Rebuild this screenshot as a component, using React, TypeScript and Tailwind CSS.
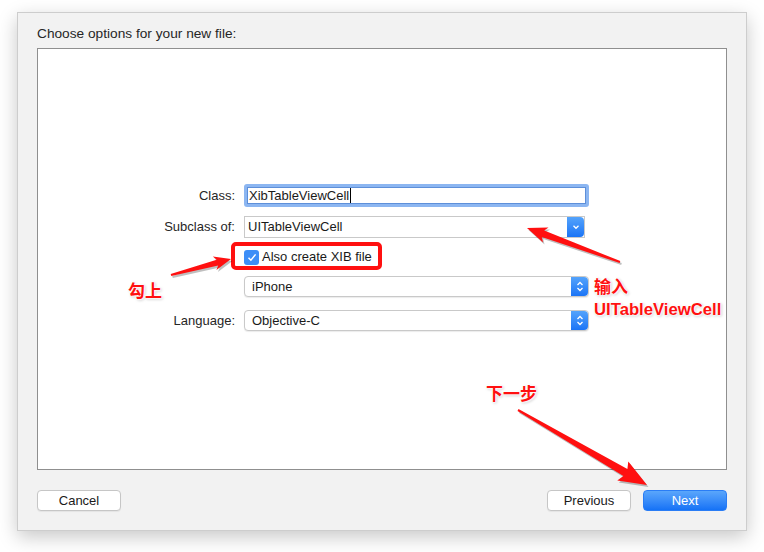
import React from "react";

const FONT = "font-['Helvetica_Neue','Liberation_Sans',Arial,sans-serif]";
const NOTE =
  "absolute font-bold text-[#ff1010] font-['Liberation_Sans','Noto_Sans_CJK_SC',sans-serif] leading-none [text-shadow:0_0_1px_#fff,0_0_2px_#fff,1px_1px_2px_#fff,-1px_-1px_2px_#fff,1px_1px_3px_rgba(0,0,0,0.35)]";

// polygon for a tapered annotation arrow, tail -> tip
function arrowPoints(
  x1: number,
  y1: number,
  x2: number,
  y2: number,
  head: number,
  headW: number,
  tailW: number,
  neckW: number
) {
  const dx = x2 - x1;
  const dy = y2 - y1;
  const len = Math.hypot(dx, dy);
  const ux = dx / len;
  const uy = dy / len;
  const nx = -uy;
  const ny = ux;
  const bx = x2 - ux * head;
  const by = y2 - uy * head;
  const p = (x: number, y: number) => `${x.toFixed(1)},${y.toFixed(1)}`;
  return [
    p(x1 + nx * tailW, y1 + ny * tailW),
    p(bx + ux * 3 + nx * neckW, by + uy * 3 + ny * neckW),
    p(bx + nx * headW, by + ny * headW),
    p(x2, y2),
    p(bx - nx * headW, by - ny * headW),
    p(bx + ux * 3 - nx * neckW, by + uy * 3 - ny * neckW),
    p(x1 - nx * tailW, y1 - ny * tailW),
  ].join(" ");
}

function Chevrons({ double }: { double?: boolean }) {
  return (
    <span className="flex w-[17px] self-stretch items-center justify-center rounded-r-[4px] bg-gradient-to-b from-[#54a3fb] to-[#1a74f6]">
      {double ? (
        <svg width="8" height="13" viewBox="0 0 8 13" fill="none" stroke="#fff" strokeWidth="1.3">
          <path d="M1.5 5 L4 2.5 L6.5 5" />
          <path d="M1.5 8 L4 10.5 L6.5 8" />
        </svg>
      ) : (
        <svg width="8" height="6" viewBox="0 0 8 6" fill="none" stroke="#fff" strokeWidth="1.3">
          <path d="M1.5 1.8 L4 4.3 L6.5 1.8" />
        </svg>
      )}
    </span>
  );
}

function Row({ label, children, className }: { label?: string; children: React.ReactNode; className?: string }) {
  return (
    <div className={`flex items-center ${className ?? ""}`}>
      <div className="w-[197px] text-right text-[13px] text-[#262626]">{label ? `${label}:` : ""}</div>
      <div className="ml-[9px] flex">{children}</div>
    </div>
  );
}

const arrows = [
  arrowPoints(171, 275, 231, 259, 17, 7, 1, 3),
  arrowPoints(620, 262, 527, 228, 20, 8, 1, 3.5),
  arrowPoints(518, 410, 647, 485, 28, 11, 1, 4),
];

export default function App() {
  return (
    <div className={`relative w-[764px] h-[552px] bg-white overflow-hidden ${FONT}`}>
      <div className="absolute left-[17px] top-[12px] flex h-[519px] w-[730px] flex-col border border-[#cdcdcd] bg-[#f2f2f2] px-[19px] shadow-[0_6px_18px_rgba(0,0,0,0.22)]">
        <div className="pt-[11px] h-[35px] text-[13.7px] text-[#262626]">Choose options for your new file:</div>

        <div className="h-[422px] w-[690px] border border-[#8f8f8f] bg-white pt-[135px]">
          <Row label="Class" className="h-[23px]">
            <div className="flex h-[23px] w-[345px] items-center rounded-[3px] border-[3px] border-[#8cb6f1] bg-white">
              <div className="flex h-full w-full items-center border border-[#5d8fd9] pl-[1px] text-[13px] text-[#1a1a1a]">
                XibTableViewCell<span className="ml-[1px] inline-block h-[15px] w-px bg-black" />
              </div>
            </div>
          </Row>

          <Row label="Subclass of" className="mt-[9px]">
            <div className="flex h-[22px] w-[341px] border border-[#c9c9c9] bg-white">
              <div className="flex flex-1 items-center pl-[3px] text-[13px] text-[#1a1a1a]">UITableViewCell</div>
              <Chevrons />
            </div>
          </Row>

          <Row className="mt-[11px] h-[16px]">
            <div className="flex items-center">
              <span className="flex h-[15px] w-[15px] items-center justify-center rounded-[3px] bg-[#3d8ef7]">
                <svg width="10" height="9" viewBox="0 0 10 9" fill="none" stroke="#fff" strokeWidth="1.5">
                  <path d="M1.5 4.8 L3.9 7.2 L8.6 1.4" />
                </svg>
              </span>
              <span className="ml-[3px] text-[13px] text-[#1a1a1a]">Also create XIB file</span>
            </div>
          </Row>

          <Row className="mt-[11px]">
            <div className="flex h-[21px] w-[345px] rounded-[4px] border border-[#c9c9c9] bg-white shadow-[0_1px_1px_rgba(0,0,0,0.08)]">
              <div className="flex flex-1 items-center pl-[7px] text-[13px] text-[#1a1a1a]">iPhone</div>
              <Chevrons double />
            </div>
          </Row>

          <Row label="Language" className="mt-[13px]">
            <div className="flex h-[21px] w-[345px] rounded-[4px] border border-[#c9c9c9] bg-white shadow-[0_1px_1px_rgba(0,0,0,0.08)]">
              <div className="flex flex-1 items-center pl-[7px] text-[13px] text-[#1a1a1a]">Objective-C</div>
              <Chevrons double />
            </div>
          </Row>
        </div>

        <div className="mt-[20px] flex items-center">
          <button className="h-[21px] w-[84px] rounded-[4px] border border-[#c6c6c6] bg-white text-[13px] text-[#1a1a1a] shadow-[0_1px_1px_rgba(0,0,0,0.06)]">
            Cancel
          </button>
          <div className="flex-1" />
          <button className="h-[21px] w-[84px] rounded-[4px] border border-[#c6c6c6] bg-white text-[13px] text-[#1a1a1a] shadow-[0_1px_1px_rgba(0,0,0,0.06)]">
            Previous
          </button>
          <button className="ml-[12px] h-[21px] w-[84px] rounded-[4px] border border-[#2a7df5] bg-gradient-to-b from-[#5aa6fb] to-[#1472f6] text-[13px] text-white">
            Next
          </button>
        </div>
      </div>

      {/* annotations */}
      <div className="absolute left-[231px] top-[242px] h-[28px] w-[151px] rounded-[5px] border-[4px] border-[#ff1010]" />

      <svg className="absolute inset-0" width="764" height="552" viewBox="0 0 764 552">
        <g fill="rgba(0,0,0,0.25)" transform="translate(1.5 2)">
          {arrows.map((pts, i) => (
            <polygon key={i} points={pts} />
          ))}
        </g>
        <g fill="#ff1010">
          {arrows.map((pts, i) => (
            <polygon key={i} points={pts} />
          ))}
        </g>
      </svg>

      <div className={`${NOTE} left-[128px] top-[283px] text-[17px]`}>勾上</div>
      <div className={`${NOTE} left-[594px] top-[279px] text-[17px]`}>输入</div>
      <div className={`${NOTE} left-[594px] top-[302px] text-[16.7px]`}>UITableViewCell</div>
      <div className={`${NOTE} left-[486px] top-[386px] text-[17px]`}>下一步</div>
    </div>
  );
}
